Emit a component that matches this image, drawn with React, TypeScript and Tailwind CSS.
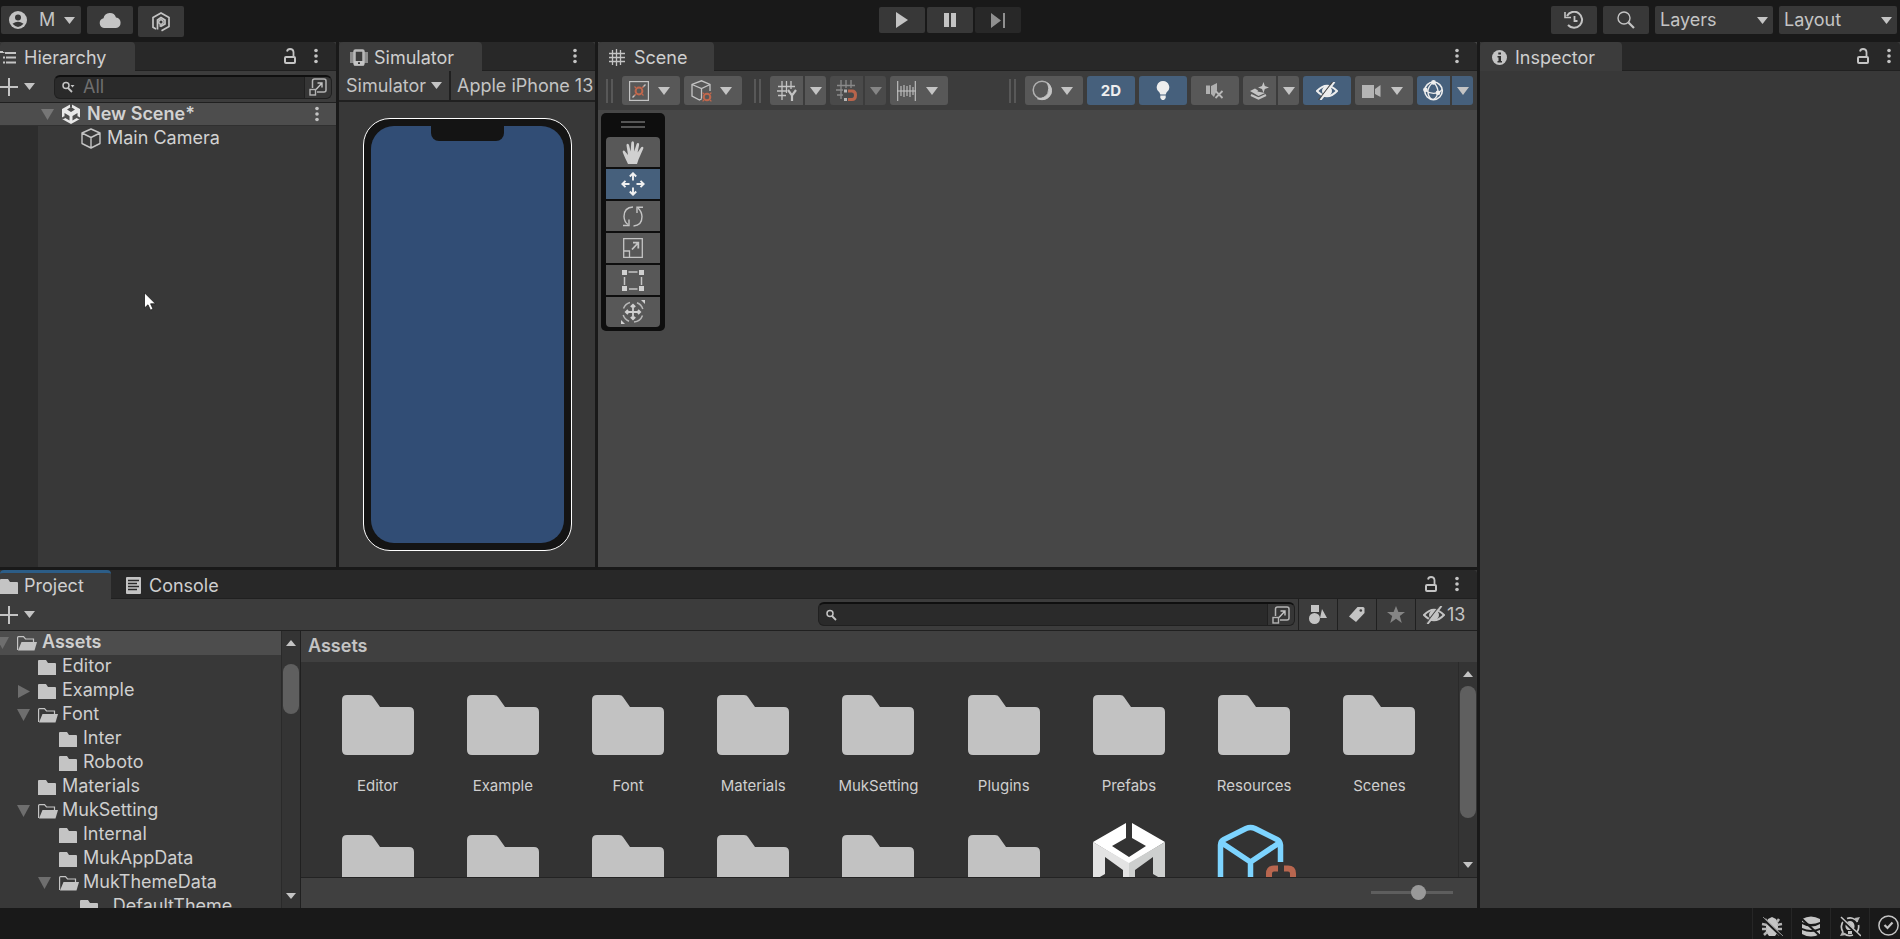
import React from "react";

type Kids = { children?: React.ReactNode };

/* ---------- icons ---------- */

function Icon({ w, h, children, className = "" }: Kids & { w: number; h: number; className?: string }) {
  return (
    <svg width={w} height={h} viewBox={`0 0 ${w} ${h}`} fill="none" stroke="none" className={`shrink-0 ${className}`} aria-hidden="true">
      {children}
    </svg>
  );
}

const Caret = ({ className = "text-[#c4c4c4]" }: { className?: string }) => (
  <Icon w={12} h={8} className={className}><path d="M0 0H12L6 8Z" fill="currentColor" /></Icon>
);
const SmallCaret = () => (
  <Icon w={11} h={7} className="text-[#c4c4c4]"><path d="M0 0H11L5.500 7Z" fill="currentColor" /></Icon>
);
const Dots = () => (
  <Icon w={4} h={16}><g fill="#c4c4c4"><circle cx="2" cy="2.5" r="1.8" /><circle cx="2" cy="8" r="1.8" /><circle cx="2" cy="13.5" r="1.8" /></g></Icon>
);
const Lock = () => (
  <Icon w={12} h={16}>
    <rect x="1" y="9" width="10" height="6" rx="1" stroke="#c4c4c4" strokeWidth="2" />
    <path d="M3 3.500Q3.500 1 6 1Q9.300 1 9.500 4V8" stroke="#c4c4c4" strokeWidth="1.800" />
  </Icon>
);
const Plus = () => (
  <Icon w={18} h={18}><path d="M9 0V18M0 9H18" stroke="#c4c4c4" strokeWidth="2" /></Icon>
);
const Account = () => (
  <Icon w={18} h={18}>
    <circle cx="9" cy="9" r="9" fill="#c4c4c4" />
    <circle cx="9" cy="6.500" r="3" fill="#383838" />
    <path d="M3.500 12.800Q9 8.600 14.500 12.800Q9 19 3.500 12.800Z" fill="#383838" />
  </Icon>
);
const Cloud = () => (
  <Icon w={22} h={16}><path d="M5 16A5 5 0 0 1 4.500 6.200A6.500 6.500 0 0 1 17 5.500A5.300 5.300 0 0 1 17 16Z" fill="#c4c4c4" /></Icon>
);
const VersionControl = () => (
  <Icon w={18} h={20}>
    <path d="M4 17L1 15.200V5.500L9 1L17 5.500V14.500L9.500 18.700" stroke="#c4c4c4" strokeWidth="1.700" />
    <path d="M5.500 17.500V8L9 5.600L13 8V12L9 14.300L7.500 13.500" stroke="#c4c4c4" strokeWidth="1.700" />
    <circle cx="9" cy="10" r="2.200" stroke="#c4c4c4" strokeWidth="1.400" />
  </Icon>
);
const Play = () => <Icon w={12} h={16}><path d="M0 0L12 8L0 16Z" fill="#c4c4c4" /></Icon>;
const Pause = () => <Icon w={12} h={16}><path d="M0 1H5V15H0ZM7 1H12V15H7Z" fill="#c4c4c4" /></Icon>;
const Step = () => <Icon w={16} h={15}><path d="M1 0L11 7.500L1 15ZM13 0H15V15H13Z" fill="#909090" /></Icon>;
const History = () => (
  <Icon w={20} h={18}>
    <path d="M3 5A8 8 0 1 1 4 14" stroke="#c4c4c4" strokeWidth="2" />
    <path d="M1 1V6.500H7" stroke="#c4c4c4" strokeWidth="1.600" />
    <path d="M10.500 5V10H13.500" stroke="#c4c4c4" strokeWidth="1.800" />
  </Icon>
);
const Search = () => (
  <Icon w={18} h={18}>
    <circle cx="7" cy="7" r="6" stroke="#c4c4c4" strokeWidth="1.400" />
    <path d="M11.500 11.500L17 17" stroke="#c4c4c4" strokeWidth="2.200" />
  </Icon>
);
const SmallSearch = ({ menu = false }: { menu?: boolean }) => (
  <Icon w={13} h={12}>
    <circle cx="4" cy="4.500" r="3" stroke="#c4c4c4" strokeWidth="1.500" />
    <path d="M6 7L10 11" stroke="#c4c4c4" strokeWidth="1.800" />
    {menu && <path d="M8.500 4H12.500L10.500 6.500Z" fill="#c4c4c4" />}
  </Icon>
);
const Popout = () => (
  <Icon w={18} h={18}>
    <path d="M3.500 10V3Q3.500 1 5.500 1H15Q17 1 17 3V12Q17 14 15 14H8" stroke="#b4b4b4" strokeWidth="1.500" />
    <path d="M7 11.500L13 5M8.500 5H13V9.500" stroke="#c4c4c4" strokeWidth="1.400" />
    <rect x="1" y="11.500" width="5.500" height="5.500" stroke="#b4b4b4" strokeWidth="1.400" />
  </Icon>
);
const HierarchyIcon = () => (
  <Icon w={16} h={13}><path d="M0 1H3M5 2H16M3 6.500H5M6 6.500H16M3 11.500H5M6 11.500H16M3.500 1V2" stroke="#c4c4c4" strokeWidth="1.900" /></Icon>
);
const DeviceIcon = () => (
  <Icon w={18} h={17}>
    <path d="M0 3H4V14H0ZM14 3H18V14H14Z" fill="#8c8c8c" />
    <rect x="4.500" y="1.500" width="9" height="14" rx="1" stroke="#b8b8b8" strokeWidth="2.500" />
    <path d="M4 12H14V16.500H4Z" fill="#c4c4c4" /><path d="M8 13.300H10V15H8Z" fill="#333" />
  </Icon>
);
const GridIcon = () => (
  <Icon w={16} h={17}><path d="M0 4.500H16M0 8.500H16M0 12.500H16M3.500 1V16M7.500 0V17M11.500 1V16" stroke="#c4c4c4" strokeWidth="1.300" /></Icon>
);
const InfoIcon = () => (
  <Icon w={15} h={15}><circle cx="7.500" cy="7.500" r="7.500" fill="#c4c4c4" /><path d="M6.300 2.500H9V4.600H6.300ZM5.500 6H9V11H10V12.500H5.500V11H6.500V7.400H5.500Z" fill="#303030" /></Icon>
);
const ConsoleIcon = () => (
  <Icon w={15} h={17}><rect width="15" height="17" rx="1" fill="#c4c4c4" /><path d="M2 3.500H13M2 6.500H11M2 9.500H13M2 12.500H11" stroke="#282828" strokeWidth="1.400" /></Icon>
);
const FolderIcon = () => (
  <Icon w={18} h={15}><path d="M0 1Q0 0 1 0H8L10 3H17Q18 3 18 4V15H0Z" fill="#c4c4c4" /></Icon>
);
const FolderOpen = () => (
  <Icon w={20} h={15}>
    <path d="M.6 14V1.500Q.6 .6 1.500 .6H6.500L8.500 3H16.500V6" stroke="#c4c4c4" strokeWidth="1.200" />
    <path d="M4.500 6H20L17.500 14.500H1Z" fill="#c4c4c4" />
  </Icon>
);
const UnitySmall = () => (
  <Icon w={18} h={20}>
    <path d="M9 0L18 5V15L9 20L0 15V5Z" fill="#e8e8e8" />
    <path d="M9 3L13 5.500L9 8L5 5.500ZM2.500 9L7.500 12V16.500L2.500 13.500ZM15.500 9L10.500 12V16.500L15.500 13.500Z" fill="#4d4d4d" />
    <path d="M9 0V3.500M0 14.500L3 13M18 14.500L15 13" stroke="#4d4d4d" strokeWidth="2" />
  </Icon>
);
const CubeIcon = () => (
  <Icon w={20} h={21}><path d="M10 1L19 5V15.500L10 20L1 15.500V5ZM1 5L10 9.500L19 5M10 9.500V20" stroke="#c4c4c4" strokeWidth="1.400" strokeLinejoin="round" /></Icon>
);

/* scene toolbar icons */
const PivotIcon = () => (
  <Icon w={20} h={20}>
    <rect x=".6" y=".6" width="18.800" height="18.800" stroke="#c4c4c4" strokeWidth="1.200" />
    <path d="M3.500 16.500L6 14M14 6L16.500 3.500" stroke="#c4c4c4" strokeWidth="1.400" />
    <circle cx="10" cy="10" r="3.400" stroke="#c0674c" strokeWidth="2" />
    <path d="M5.500 5.500L7 7M14.500 5.500L13 7M5.500 14.500L7 13M14.500 14.500L13 13" stroke="#c0674c" strokeWidth="1.200" />
  </Icon>
);
const CubePivotIcon = () => (
  <Icon w={21} h={22}>
    <path d="M11 18.500L8.500 20L1 16V4.500L10.500 .8L19 4.500V11M1 4.500L10.500 8.500L19 4.500M10.500 8.500V18" stroke="#c4c4c4" strokeWidth="1.300" />
    <circle cx="16" cy="17" r="3.300" stroke="#c0674c" strokeWidth="2" />
    <path d="M11.600 12.600L13 14M20.400 12.600L19 14M11.600 21.400L13 20M20.400 21.400L19 20" stroke="#c0674c" strokeWidth="1.200" />
  </Icon>
);
const GridYIcon = () => (
  <Icon w={20} h={20}>
    <path d="M1 5.500H18M0 10H10M1 14.500H9M5 0V19M9.500 0V12M14 0V8" stroke="#c4c4c4" strokeWidth="1.300" />
    <path d="M11 9L15 14.500L19 9M15 14.500V20" stroke="#c4c4c4" strokeWidth="2.200" />
  </Icon>
);
const SnapIcon = () => (
  <Icon w={21} h={21}>
    <path d="M1 5.500H19M0 10H7M1 15H7M5 0V19M10 0V8M15 0V8" stroke="#8a8a8a" strokeWidth="1.300" />
    <path d="M12 11H16Q19.500 11 19.500 15Q19.500 19.500 16 19.500H12" stroke="#b8644b" strokeWidth="3" />
    <path d="M8 9.500H11V12.500H8ZM8 18H11V21H8Z" fill="#b4b4b4" />
  </Icon>
);
const RulerIcon = () => (
  <Icon w={19} h={20}><path d="M.7 0V20M18.300 0V20M0 10H19M4 5V15M7 4V16M10 5V15M13 4V16M16 6V14" stroke="#c4c4c4" strokeWidth="1.100" /></Icon>
);
const ShadeIcon = () => (
  <Icon w={21} h={21}><circle cx="10" cy="10" r="8.800" stroke="#b0b0b0" strokeWidth="1.500" /><path d="M15.500 3Q21 7 19 14Q15 22 5.500 18.800Q13 18.500 15.800 13.500Q18 8 15.500 3Z" fill="#c4c4c4" stroke="#c4c4c4" /></Icon>
);
const BulbIcon = () => (
  <Icon w={14} h={19}><path d="M7 0A6.300 6.300 0 0 1 10.500 11.500L9.700 13.500H4.300L3.500 11.500A6.300 6.300 0 0 1 7 0Z" fill="#eee" /><path d="M4.300 14.500H9.700V17L8 19H6L4.300 17Z" fill="#eee" /></Icon>
);
const MuteIcon = () => (
  <Icon w={18} h={16}><path d="M0 2.500H4V11H0ZM5 3L11 0V7L8 14L5 11Z" fill="#b0b0b0" /><path d="M9.500 8L16.500 15M16.500 8L9.500 15" stroke="#b8b8b8" strokeWidth="1.800" /></Icon>
);
const FxIcon = () => (
  <Icon w={19} h={18}>
    <path d="M13.500 0L14.800 4L19 5.500L14.800 7L13.500 11L12 7L8 5.500L12 4Z" fill="#c4c4c4" />
    <path d="M0 9L5 6.500L8 8.500L7.500 9.500L15 11L8.500 14Z" fill="#c4c4c4" />
    <path d="M1 13L8.500 16.500L16 13" stroke="#c4c4c4" strokeWidth="2.200" />
  </Icon>
);
const HiddenEye = ({ className }: { className: string }) => (
  <Icon w={22} h={18} className={className}>
    <path d="M1 9Q11 -1.500 21 9Q11 19.500 1 9Z" stroke="currentColor" strokeWidth="2" />
    <circle cx="11" cy="9" r="5" fill="currentColor" />
    <path d="M16.500 0L2.500 18" stroke="#484848" strokeWidth="1.200" />
    <path d="M18.500 0L4.500 18" stroke="currentColor" strokeWidth="2" />
  </Icon>
);
const CameraIcon = () => (
  <Icon w={19} h={14}><path d="M0 1H12V14H0ZM13 5L18.500 1V13L13 10Z" fill="#b4b4b4" /></Icon>
);
const GizmoIcon = () => (
  <Icon w={21} h={21}>
    <circle cx="10.500" cy="10.800" r="8.800" stroke="#eee" strokeWidth="1.600" />
    <path d="M10.500 2Q4 7 5 13Q6 18 9 19.500M10.500 2Q15 7 15 12Q14.500 17 10.500 19.500M2 10Q8 15 15 12.500Q18 11.500 19 9.500" stroke="#eee" strokeWidth="1.300" />
    <circle cx="10.500" cy="2.400" r="2.400" fill="#eee" /><circle cx="2.400" cy="9.800" r="2.300" fill="#eee" /><circle cx="15" cy="12.800" r="2.400" fill="#eee" />
  </Icon>
);

/* transform tools */
const HandIcon = () => (
  <Icon w={22} h={23}>
    <path d="M6 23Q3 17 .8 11.500Q.2 9.800 1.500 9.500Q2.800 9.300 3.500 11L6 14L4.500 4.500Q4.400 2.800 5.500 2.700Q6.800 2.600 7.100 4.200L8.600 10.500L9.300 1.700Q9.500 .2 10.700 .2Q12 .3 12 1.800L12.200 10.500L14.600 3Q15.200 1.700 16.300 2.100Q17.400 2.600 17.100 4L15.600 11.500L19 6.500Q20 5.300 21 6Q21.800 6.700 21.200 7.800Q18.500 14 16.500 18.500L15 23Z" fill="#d0d0d0" />
  </Icon>
);
const MoveIcon = () => (
  <Icon w={24} h={24}>
    <path d="M12 8.500V1.500M12 15.500V22.500M8.500 12H1.500M15.500 12H22.500M8.800 4.500L12 1.300L15.200 4.500M8.800 19.500L12 22.700L15.200 19.500M4.500 8.800L1.300 12L4.500 15.200M19.500 8.800L22.700 12L19.500 15.200" stroke="#f0f0f0" strokeWidth="1.900" />
  </Icon>
);
const RotateIcon = () => (
  <Icon w={20} h={21}>
    <path d="M10 1Q1 1.500 1 10.500Q1.300 16 5 18.500M10.500 20Q19 19.500 19 10.500Q18.700 5.500 15 2" stroke="#c4c4c4" strokeWidth="1.400" />
    <path d="M6 13.500V19.500H0M14 7V1.200H20" stroke="#c4c4c4" strokeWidth="1.400" />
  </Icon>
);
const ScaleIcon = () => (
  <Icon w={20} h={20}>
    <path d="M.7 .7H19.300V19.300H.7ZM.7 13H6.500V19.300" stroke="#c4c4c4" strokeWidth="1.300" />
    <path d="M9 11.500L15 5M10 4.700H15.300V10.500" stroke="#c4c4c4" strokeWidth="1.800" />
  </Icon>
);
const RectIcon = () => (
  <Icon w={22} h={21}>
    <path d="M0 0H5V5H0ZM17 0H22V5H17ZM0 16H5V21H0ZM17 16H22V21H17Z" fill="#d0d0d0" />
    <path d="M6.500 2H15.500M7 19H15.500M2.500 7V15M19.500 7V15" stroke="#c4c4c4" strokeWidth="1.500" />
  </Icon>
);
const TransformIcon = () => (
  <Icon w={24} h={24}>
    <path d="M12 5V19M5 12H19M9.800 7L12 4.800L14.200 7M9.800 17L12 19.200L14.200 17M7 9.800L4.800 12L7 14.200M17 9.800L19.200 12L17 14.200" stroke="#d0d0d0" strokeWidth="1.800" />
    <path d="M9 2.500A10 10 0 0 0 2.500 8.500M2.200 15A10 10 0 0 0 8 21.200M13 22A10 10 0 0 0 21.500 15.500M21.800 9A10 10 0 0 0 16 2.800" stroke="#b8b8b8" strokeWidth="1.500" />
    <path d="M20 0H24V4ZM0 20V24H4Z" fill="#d0d0d0" />
  </Icon>
);

/* project toolbar */
const ShapesIcon = () => (
  <Icon w={18} h={19}><path d="M2 0H10V7H2ZM13 4L18 13H11Z" fill="#c4c4c4" /><circle cx="5.500" cy="13.500" r="5.500" fill="#c4c4c4" /></Icon>
);
const TagIcon = () => (
  <Icon w={16} h={15}><path d="M8.500 0H14Q15.500 0 15.500 1.500V6L7 15L0 9.500Z" fill="#c4c4c4" /><circle cx="11.800" cy="3.500" r="1.300" fill="#3c3c3c" /></Icon>
);
const StarIcon = () => (
  <Icon w={18} h={17}><path d="M9 0L11.400 6H18L12.800 10L14.800 17L9 12.800L3.200 17L5.200 10L0 6H6.600Z" fill="#858585" /></Icon>
);
const BigFolder = () => (
  <Icon w={72} h={84}><path d="M0 17Q0 12 5 12H27Q30 12 31 14L38 24H67Q72 24 72 29V67Q72 72 67 72H5Q0 72 0 67Z" fill="#c2c2c2" /></Icon>
);
const UnityBig = () => (
  <Icon w={72} h={84}>
    <path d="M33 0L0 19L36 41L72 19L39 0V15L53 23L36 34L19 23L33 15Z" fill="#fff" />
    <path d="M0 19L36 40V84L30 80V47L12 34V51L0 58Z" fill="#e3e3e3" />
    <path d="M72 19L36 40V84L42 80V47L60 34V51L72 58Z" fill="#cdcfce" />
  </Icon>
);
const PrefabBig = () => (
  <Icon w={72} h={84} className="overflow-visible">
    <path d="M62.500 39V22Q62 18 59 16.500L37 5.500Q32.500 3.500 28 5.500L6 16.500Q2.500 18.500 2.500 22V62L32.500 80V40M4 20L32.500 39L61 20" stroke="#7dd4ff" strokeWidth="5.500" />
    <path d="M60 45.500H56Q51 45.500 51 50.500V62M66 45.500H70Q75 45.500 75 50.500V62" stroke="#b8664f" strokeWidth="6" />
  </Icon>
);

/* status bar */
const BugOff = () => (
  <Icon w={22} h={21}>
    <path d="M7 3L11 1L15 3L17 7V16L14 20H8L5 16V7Z" fill="#c4c4c4" />
    <path d="M4 3L6 6M18 3L16 6M1 8L6 9M21 8L16 9M1 13H6M21 13H16M3 19L6 16M19 19L16 16" stroke="#b4b4b4" strokeWidth="2.500" />
    <path d="M0 1L21 21" stroke="#191919" strokeWidth="2" /><path d="M2 1L22 20" stroke="#8a8a8a" strokeWidth="1" />
  </Icon>
);
const CacheOff = () => (
  <Icon w={20} h={21}>
    <path d="M1 3Q10 -2 19 3V6Q10 10 1 6ZM1 8Q10 13 19 8V12Q10 16 1 12ZM1 14Q10 18 19 14V18Q10 23 1 18Z" fill="#c4c4c4" />
    <path d="M0 2L20 21" stroke="#191919" strokeWidth="2" />
  </Icon>
);
const LightOff = () => (
  <Icon w={22} h={21}>
    <path d="M5 4.500A9 9 0 0 0 4 16M8 2.500A9 9 0 0 1 18.500 6M18 16A9 9 0 0 0 19.500 9M14 19A9 9 0 0 1 5 17.500" stroke="#c4c4c4" strokeWidth="1.700" />
    <path d="M11 5A5 5 0 0 1 13.500 14H8.500A5 5 0 0 1 11 5ZM9 15H13V18H9Z" fill="#c4c4c4" />
    <path d="M1 20L3.500 15L7 19ZM21 1L18.500 6L15.500 2Z" fill="#b4b4b4" />
    <path d="M1 1L21 21" stroke="#191919" strokeWidth="3" /><path d="M2 1L22 20" stroke="#c4c4c4" strokeWidth="1.500" />
  </Icon>
);
const CheckCircle = () => (
  <Icon w={21} h={21}><circle cx="10.500" cy="10.500" r="9.600" stroke="#c4c4c4" strokeWidth="1.500" /><path d="M6.500 10L9.500 13L14.500 7.500" stroke="#c4c4c4" strokeWidth="2.200" /></Icon>
);

/* ---------- shared parts ---------- */

function TopButton({ label, className = "w-[46px] h-7", children }: Kids & { label: string; className?: string }) {
  return (
    <button aria-label={label} className={`flex shrink-0 items-center justify-center rounded-[2px] bg-[#383838] ${className}`}>
      {children}
    </button>
  );
}

function TopSelect({ label }: { label: string }) {
  return (
    <div className="relative h-7 w-[118px] shrink-0">
      <select aria-label={label} className="h-full w-full appearance-none rounded-[2px] bg-[#383838] pl-[5px] text-[#c4c4c4]">
        <option>{label}</option>
      </select>
      <span className="pointer-events-none absolute inset-y-0 right-[5px] flex items-center"><SmallCaret /></span>
    </div>
  );
}

function TabStrip({ children, locked = false, edge = "pr-[18px]" }: Kids & { locked?: boolean; edge?: string }) {
  return (
    <div className="flex h-[29px] shrink-0 items-stretch rounded-t-[4px] border-b border-[#202020] bg-[#282828]">
      {children}
      <div className={`ml-auto flex items-center gap-[18px] ${edge}`}>
        {locked && <button aria-label="Lock"><Lock /></button>}
        <button aria-label="Panel menu"><Dots /></button>
      </div>
    </div>
  );
}

function Tab({ icon, label, className, active = true }: { icon: React.ReactNode; label: string; className: string; active?: boolean }) {
  return (
    <button className={`-mb-px flex items-center whitespace-nowrap text-[#cfcfcf] ${active ? "rounded-t-[4px] bg-[#3c3c3c]" : ""} ${className}`}>
      {icon}
      <span>{label}</span>
    </button>
  );
}

function SearchBox({ placeholder, menu, className }: { placeholder?: string; menu?: boolean; className: string }) {
  return (
    <div className={`flex h-6 items-stretch overflow-hidden rounded-[6px] border border-t-2 border-[#202020] border-t-[#0f0f0f] bg-[#2a2a2a] ${className}`}>
      <label className="flex min-w-0 flex-1 items-center pl-[7px]">
        <SmallSearch menu={menu} />
        <input aria-label="Search" placeholder={placeholder} className="ml-2 min-w-0 flex-1 bg-transparent outline-none placeholder:text-[#6f6f6f]" />
      </label>
      <button aria-label="Open search window" className="flex w-[27px] items-center justify-center border-l border-[#202020] bg-[#363636]"><Popout /></button>
    </div>
  );
}

const Grip = () => (
  <span className="flex h-6 w-[7px] shrink-0 justify-between"><i className="w-[2px] bg-[#585858]" /><i className="w-[2px] bg-[#585858]" /></span>
);

const toneClass = {
  normal: "bg-[#585858] text-[#c4c4c4]",
  dim: "bg-[#4a4a4a] text-[#858585]",
  on: "bg-[#46607c] text-[#eeeeee]",
};
type Tone = keyof typeof toneClass;

function Tool({ label, tone = "normal", children }: Kids & { label: string; tone?: Tone }) {
  return <button aria-label={label} className={`flex h-[29px] w-12 shrink-0 items-center justify-center rounded-[3px] ${toneClass[tone]}`}>{children}</button>;
}
function MenuTool({ label, children }: Kids & { label: string }) {
  return (
    <button aria-label={label} className="flex h-[29px] w-[58px] shrink-0 items-center justify-between rounded-[3px] bg-[#585858] pl-[7px] pr-[10px]">
      {children}<Caret />
    </button>
  );
}
function SplitTool({ label, tone = "normal", children }: Kids & { label: string; tone?: Tone }) {
  return (
    <div className="flex shrink-0 gap-[2px]">
      <button aria-label={label} className={`flex h-[29px] w-[33px] items-center justify-center rounded-l-[3px] ${toneClass[tone]}`}>{children}</button>
      <button aria-label={`${label} options`} className={`flex h-[29px] w-[21px] items-center justify-center rounded-r-[3px] ${toneClass[tone]}`}>
        <Caret className={tone === "dim" ? "text-[#858585]" : "text-[#c4c4c4]"} />
      </button>
    </div>
  );
}

function ScrollBar({ thumb, className = "" }: { thumb: string; className?: string }) {
  return (
    <div className={`flex w-[19px] shrink-0 flex-col items-center justify-between border-l border-[#2a2a2a] bg-[#343434] ${className}`}>
      <button aria-label="Scroll up" className="flex h-6 w-full items-center justify-center"><svg width="10" height="6" aria-hidden="true"><path d="M0 6L5 0L10 6Z" fill="#c4c4c4" /></svg></button>
      <div className="w-full flex-1 px-px"><div className={`w-4 rounded-full bg-[#5f5f5f] ${thumb}`} /></div>
      <button aria-label="Scroll down" className="flex h-6 w-full items-center justify-center"><svg width="10" height="6" aria-hidden="true"><path d="M0 0H10L5 6Z" fill="#c4c4c4" /></svg></button>
    </div>
  );
}

/* ---------- panels ---------- */

function TopBar() {
  return (
    <header className="grid h-[42px] shrink-0 grid-cols-[1fr_auto_1fr] items-start">
      <div className="flex items-start pl-px pt-[6px]">
        <button aria-label="Account" className="flex h-7 w-20 items-center rounded-[2px] bg-[#383838] pl-2 pr-[6px] text-[#c4c4c4]">
          <Account /><span className="ml-3">M</span><span className="ml-auto"><SmallCaret /></span>
        </button>
        <TopButton label="Cloud services" className="ml-[6px] h-7 w-[46px]"><Cloud /></TopButton>
        <TopButton label="Version control" className="ml-[5px] h-[31px] w-[46px]"><VersionControl /></TopButton>
      </div>
      <div className="flex gap-[2px] pt-[7px]">
        <TopButton label="Play" className="h-[26px] w-[46px]"><Play /></TopButton>
        <TopButton label="Pause" className="h-[26px] w-[46px]"><Pause /></TopButton>
        <button aria-label="Step" className="flex h-[26px] w-[46px] items-center justify-center rounded-[2px] bg-[#282828]"><Step /></button>
      </div>
      <div className="flex justify-end gap-[6px] pr-[3px] pt-[6px]">
        <TopButton label="Undo history"><History /></TopButton>
        <TopButton label="Search"><Search /></TopButton>
        <TopSelect label="Layers" />
        <TopSelect label="Layout" />
      </div>
    </header>
  );
}

function HierarchyPanel() {
  return (
    <section className="flex w-[336px] shrink-0 flex-col bg-[#383838]">
      <TabStrip locked><Tab icon={<HierarchyIcon />} label="Hierarchy" className="w-[135px] gap-2 pt-[2px]" /></TabStrip>
      <div className="flex h-8 shrink-0 items-center border-b border-[#202020] bg-[#3c3c3c]">
        <button aria-label="Create" className="flex items-center gap-[6px]"><Plus /><SmallCaret /></button>
        <SearchBox placeholder="All" menu className="ml-[19px] mr-1 flex-1" />
      </div>
      <div className="flex h-[23px] shrink-0 items-center border-b border-[#303030] bg-[#4d4d4d] pl-[41px] pr-[17px] font-semibold text-[#d2d2d2]">
        <Icon w={13} h={11}><path d="M0 0H13L6.500 11Z" fill="#767676" /></Icon>
        <span className="ml-2 mr-[7px]"><UnitySmall /></span>
        New Scene*
        <button aria-label="Scene menu" className="ml-auto"><Dots /></button>
      </div>
      <div className="flex flex-1">
        <div className="w-[38px] bg-[#2d2d2d]" />
        <div className="flex-1">
          <div className="flex h-6 items-center gap-[6px] pl-[43px] text-[#d2d2d2]"><CubeIcon />Main Camera</div>
        </div>
      </div>
    </section>
  );
}

function SimulatorPanel() {
  return (
    <section className="flex w-[256px] shrink-0 flex-col overflow-hidden bg-[#383838]">
      <TabStrip><Tab icon={<DeviceIcon />} label="Simulator" className="w-[143px] gap-[6px] pl-[11px] pt-[2px]" /></TabStrip>
      <div className="flex h-[31px] shrink-0 border-b-2 border-[#202020] bg-[#3c3c3c] text-[#c4c4c4]">
        <div className="relative ml-px w-[111px] shrink-0 border-r-2 border-[#202020]">
          <select aria-label="View" className="h-full w-full appearance-none bg-transparent pl-[6px]"><option>Simulator</option></select>
          <span className="pointer-events-none absolute inset-y-0 right-[7px] flex items-center"><SmallCaret /></span>
        </div>
        <select aria-label="Device" className="min-w-0 flex-1 appearance-none bg-transparent pl-[6px]"><option>Apple iPhone 13</option></select>
      </div>
      <div className="flex flex-1 items-center justify-center">
        <div className="relative h-[433px] w-[209px] rounded-[27px] border border-white bg-[#141414] p-[7px]">
          <div className="h-full rounded-[23px] bg-[#314d75]" />
          <div className="absolute left-[67px] top-[7px] h-[15px] w-[73px] rounded-b-[8px] bg-[#141414]" />
        </div>
      </div>
    </section>
  );
}

const transformTools = [
  { name: "View", icon: <HandIcon /> },
  { name: "Move", icon: <MoveIcon />, on: true },
  { name: "Rotate", icon: <RotateIcon /> },
  { name: "Scale", icon: <ScaleIcon /> },
  { name: "Rect", icon: <RectIcon /> },
  { name: "Transform", icon: <TransformIcon /> },
];

function ScenePanel() {
  return (
    <section className="flex min-w-0 flex-1 flex-col bg-[#474747]">
      <TabStrip><Tab icon={<GridIcon />} label="Scene" className="w-[116px] gap-[9px] pl-[11px] pt-[2px]" /></TabStrip>
      <div className="flex h-[39px] shrink-0 items-center justify-between bg-[#3c3c3c] pl-2 pr-1">
        <div className="flex items-center gap-1">
          <Grip />
          <span className="w-px" />
          <MenuTool label="Tool handle position"><PivotIcon /></MenuTool>
          <MenuTool label="Tool handle rotation"><CubePivotIcon /></MenuTool>
          <span className="ml-2 mr-[5px]"><Grip /></span>
          <SplitTool label="Grid axis"><GridYIcon /></SplitTool>
          <SplitTool label="Grid snapping" tone="dim"><SnapIcon /></SplitTool>
          <MenuTool label="Snap increment"><RulerIcon /></MenuTool>
        </div>
        <div className="flex items-center gap-1">
          <Grip />
          <span className="w-px" />
          <MenuTool label="Draw mode"><ShadeIcon /></MenuTool>
          <Tool label="2D view" tone="on"><b className="text-[15px] font-bold">2D</b></Tool>
          <Tool label="Scene lighting" tone="on"><BulbIcon /></Tool>
          <Tool label="Scene audio"><MuteIcon /></Tool>
          <SplitTool label="Effects"><FxIcon /></SplitTool>
          <Tool label="Scene visibility" tone="on"><HiddenEye className="text-[#eeeeee]" /></Tool>
          <MenuTool label="Scene camera"><CameraIcon /></MenuTool>
          <SplitTool label="Gizmos" tone="on"><GizmoIcon /></SplitTool>
        </div>
      </div>
      <div className="flex-1 pl-[3px] pt-[3px]">
        <div className="flex w-16 flex-col items-center gap-[2px] rounded-[5px] bg-[#0e0e0e] pb-1">
          <div className="flex h-[22px] w-6 flex-col justify-center gap-[3px]"><i className="h-[2px] bg-[#555]" /><i className="h-[2px] bg-[#555]" /></div>
          {transformTools.map((t) => (
            <button key={t.name} aria-label={t.name} className={`flex h-[30px] w-[54px] items-center justify-center first-of-type:rounded-t-[4px] last-of-type:rounded-b-[4px] ${t.on ? "bg-[#46607c]" : "bg-[#585858]"}`}>
              {t.icon}
            </button>
          ))}
        </div>
      </div>
    </section>
  );
}

function InspectorPanel() {
  return (
    <section className="flex w-[420px] shrink-0 flex-col bg-[#383838]">
      <TabStrip locked edge="pr-[9px]">
        <Tab icon={<InfoIcon />} label="Inspector" className="w-[142px] gap-2 pl-3 pt-[2px]" />
      </TabStrip>
    </section>
  );
}

type Node = { name: string; depth: number; state?: "open" | "closed" };
const tree: Node[] = [
  { name: "Assets", depth: 0, state: "open" },
  { name: "Editor", depth: 1 },
  { name: "Example", depth: 1, state: "closed" },
  { name: "Font", depth: 1, state: "open" },
  { name: "Inter", depth: 2 },
  { name: "Roboto", depth: 2 },
  { name: "Materials", depth: 1 },
  { name: "MukSetting", depth: 1, state: "open" },
  { name: "Internal", depth: 2 },
  { name: "MukAppData", depth: 2 },
  { name: "MukThemeData", depth: 2, state: "open" },
  { name: "_DefaultTheme", depth: 3 },
];
const indent = ["-ml-1", "ml-[17px]", "ml-[38px]", "ml-[59px]"];

function TreeRow({ node }: { node: Node }) {
  const root = node.depth === 0;
  return (
    <li className={`flex h-6 items-center whitespace-nowrap pb-[2px] text-[#cfcfcf] ${root ? "bg-[#4d4d4d] font-semibold" : ""}`}>
      <span className={`flex w-[21px] shrink-0 items-center pt-[2px] ${indent[node.depth]}`}>
        {node.state === "open" && <Icon w={13} h={12}><path d="M0 0H13L6.500 12Z" fill="#6e6e6e" /></Icon>}
        {node.state === "closed" && <Icon w={13} h={13}><path d="M1 0V13L13 6.500Z" fill="#6e6e6e" /></Icon>}
      </span>
      <span className="flex w-6 shrink-0 items-center pt-[3px]">{node.state === "open" ? <FolderOpen /> : <FolderIcon />}</span>
      <span className={root ? "pl-px" : ""}>{node.name}</span>
    </li>
  );
}

const assets = ["Editor", "Example", "Font", "Materials", "MukSetting", "Plugins", "Prefabs", "Resources", "Scenes"];

function AssetCell({ icon, label }: { icon: React.ReactNode; label?: string }) {
  return (
    <li className="flex h-[140px] flex-col items-center">
      {icon}
      {label && <span className="mt-[9px] text-[15px] leading-5 text-[#cfcfcf]">{label}</span>}
    </li>
  );
}

function ProjectPanel() {
  return (
    <section className="flex h-[338px] shrink-0 flex-col bg-[#383838]">
      <TabStrip locked>
        <Tab icon={<FolderIcon />} label="Project" className="w-[111px] gap-[6px] border-t-[3px] border-[#2c5d87]" />
        <Tab icon={<ConsoleIcon />} label="Console" active={false} className="gap-2 pl-[15px] pt-[2px]" />
      </TabStrip>
      <div className="flex h-8 shrink-0 items-stretch border-b border-[#202020] bg-[#3c3c3c]">
        <button aria-label="Create" className="flex items-center gap-[6px]"><Plus /><SmallCaret /></button>
        <SearchBox className="my-[3px] ml-auto mr-[3px] w-[477px]" />
        <button aria-label="Search by type" className="flex w-[39px] items-center justify-center border-l border-[#202020]"><ShapesIcon /></button>
        <button aria-label="Search by label" className="flex w-[39px] items-center justify-center border-l border-[#202020]"><TagIcon /></button>
        <button aria-label="Favorites" className="flex w-[39px] items-center justify-center border-l border-[#202020]"><StarIcon /></button>
        <button aria-label="Hidden packages" className="flex w-[62px] items-center gap-[2px] border-l border-[#202020] pl-[7px] text-[#c4c4c4]"><HiddenEye className="text-[#c4c4c4]" />13</button>
      </div>
      <div className="flex min-h-0 flex-1">
        <div className="flex w-[301px] shrink-0 border-r border-[#202020]">
          <ul className="min-w-0 flex-1 overflow-hidden">{tree.map((n) => <TreeRow key={n.name} node={n} />)}</ul>
          <ScrollBar thumb="mt-[9px] h-[50px]" />
        </div>
        <div className="flex min-w-0 flex-1 flex-col">
          <h2 className="flex h-[31px] shrink-0 items-center bg-[#404040] pb-px pl-[7px] font-semibold text-[#c4c4c4]">Assets</h2>
          <div className="flex min-h-0 flex-1 bg-[#333333]">
            <ul className="grid min-w-0 flex-1 grid-cols-[repeat(auto-fill,minmax(125px,1fr))] content-start overflow-hidden pl-[14px] pr-4 pt-[21px]">
              {assets.map((a) => <AssetCell key={a} icon={<BigFolder />} label={a} />)}
              {[0, 1, 2, 3, 4, 5].map((i) => <AssetCell key={i} icon={<BigFolder />} />)}
              <AssetCell icon={<UnityBig />} />
              <AssetCell icon={<PrefabBig />} />
            </ul>
            <ScrollBar thumb="h-[132px]" />
          </div>
          <div className="flex h-[31px] shrink-0 items-center justify-end border-t border-[#232323] bg-[#404040] pb-[2px] pr-6">
            <input
              type="range"
              aria-label="Icon size"
              defaultValue={59}
              className="h-[15px] w-[82px] appearance-none bg-transparent [&::-webkit-slider-runnable-track]:h-[3px] [&::-webkit-slider-runnable-track]:bg-[#5e5e5e] [&::-webkit-slider-thumb]:-mt-[6px] [&::-webkit-slider-thumb]:h-[15px] [&::-webkit-slider-thumb]:w-[15px] [&::-webkit-slider-thumb]:appearance-none [&::-webkit-slider-thumb]:rounded-full [&::-webkit-slider-thumb]:bg-[#999999]"
            />
          </div>
        </div>
      </div>
    </section>
  );
}

function StatusBar() {
  const cell = "flex h-full w-[39px] items-center justify-center border-l border-[#262626] pt-[6px]";
  return (
    <footer className="flex h-[31px] shrink-0 justify-end">
      <button aria-label="Debug mode" className={cell}><BugOff /></button>
      <button aria-label="Cache server" className={cell}><CacheOff /></button>
      <button aria-label="Auto lighting" className={cell}><LightOff /></button>
      <button aria-label="Background tasks" className="flex h-full w-[31px] items-center justify-end border-l border-[#262626] pr-px pt-[4px]"><CheckCircle /></button>
    </footer>
  );
}

export default function App() {
  return (
    <div className="relative flex h-screen w-full flex-col overflow-hidden bg-[#191919] font-['Inter',sans-serif] text-[18px] leading-6">
      <TopBar />
      <main className="flex min-h-0 flex-1 gap-[3px]">
        <div className="flex min-w-0 flex-1 flex-col gap-[3px]">
          <div className="flex min-h-0 flex-1 gap-[3px]">
            <HierarchyPanel />
            <SimulatorPanel />
            <ScenePanel />
          </div>
          <ProjectPanel />
        </div>
        <InspectorPanel />
      </main>
      <StatusBar />
      <svg className="pointer-events-none absolute left-[144px] top-[292px]" width="12" height="19" viewBox="0 0 12 19" aria-hidden="true">
        <path d="M.5 .8V16L4 12.800L6.500 18.200L9 17L6.600 11.800H11.500Z" fill="#fff" stroke="#1a1a1a" strokeWidth=".8" />
      </svg>
    </div>
  );
}
